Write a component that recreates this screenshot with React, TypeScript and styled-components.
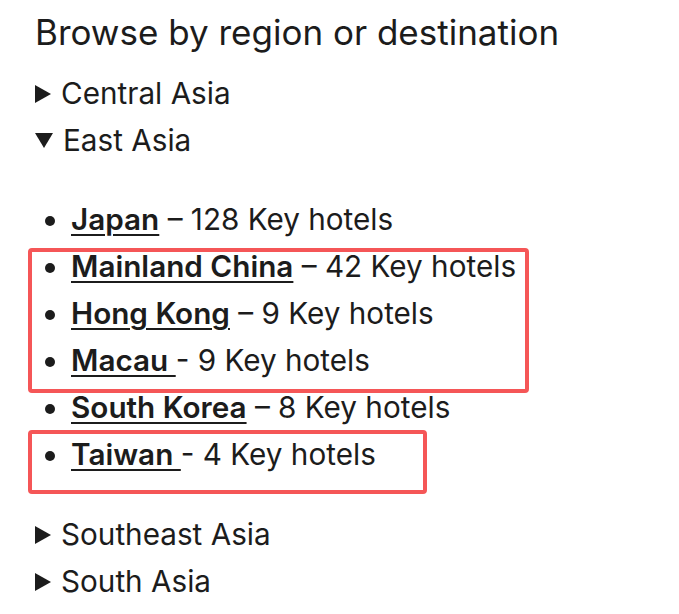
import * as React from 'react';
import styled, { createGlobalStyle } from 'styled-components';

const GlobalStyle = createGlobalStyle`
    body {
        margin: 0;
        background: #ffffff;
        color: #1c1c1c;
        font-family: Inter, "Noto Sans", sans-serif;
    }
`;

const Page = styled.div`
    position: relative;
    padding: 10px 0 0 35px;
`;

const Heading = styled.h2`
    margin: 0 0 16px;
    font-size: 35px;
    font-weight: 400;
    line-height: 44px;
`;

const Region = styled.details`
    font-size: 29.7px;
    line-height: 47px;
`;

const Summary = styled.summary`
    list-style: none;
    display: flex;
    align-items: center;
    gap: 10px;
    cursor: pointer;
    &::-webkit-details-marker {
        display: none;
    }
`;

const Arrow = styled.span<{ $open?: boolean }>`
    width: 0;
    height: 0;
    ${({ $open }) =>
        $open
            ? `border-left: 9px solid transparent;
               border-right: 9px solid transparent;
               border-top: 15px solid #1c1c1c;`
            : `border-top: 9px solid transparent;
               border-bottom: 9px solid transparent;
               border-left: 16px solid #1c1c1c;`}
`;

const CountryList = styled.ul`
    margin: 32px 0 33px;
    padding-left: 36px;
`;

const Country = styled.li`
    &::marker {
        font-size: 30px;
    }
`;

const CountryLink = styled.a`
    color: #1c1c1c;
    font-weight: 600;
    text-decoration: underline;
    text-decoration-thickness: 2px;
    text-underline-offset: 4px;
`;

const Highlight = styled.div<{ $top: number; $width: number; $height: number }>`
    position: absolute;
    left: 28px;
    top: ${({ $top }) => $top}px;
    width: ${({ $width }) => $width}px;
    height: ${({ $height }) => $height}px;
    box-sizing: border-box;
    border: 4px solid #f55657;
    border-radius: 4px;
    pointer-events: none;
`;

const countries = [
    { name: 'Japan', rest: ' – 128 Key hotels' },
    { name: 'Mainland China', rest: ' – 42 Key hotels' },
    { name: 'Hong Kong', rest: ' – 9 Key hotels' },
    { name: 'Macau ', rest: '- 9 Key hotels' },
    { name: 'South Korea', rest: ' – 8 Key hotels' },
    { name: 'Taiwan ', rest: '- 4 Key hotels' },
];

export default function App() {
    return (
        <>
            <GlobalStyle />
            <Page>
                <Heading>Browse by region or destination</Heading>
                <Region>
                    <Summary>
                        <Arrow />
                        Central Asia
                    </Summary>
                </Region>
                <Region open>
                    <Summary>
                        <Arrow $open />
                        East Asia
                    </Summary>
                    <CountryList>
                        {countries.map((c) => (
                            <Country key={c.name}>
                                <CountryLink href="#">{c.name}</CountryLink>
                                {c.rest}
                            </Country>
                        ))}
                    </CountryList>
                </Region>
                <Region>
                    <Summary>
                        <Arrow />
                        Southeast Asia
                    </Summary>
                </Region>
                <Region>
                    <Summary>
                        <Arrow />
                        South Asia
                    </Summary>
                </Region>
                <Highlight $top={248} $width={501} $height={145} />
                <Highlight $top={430} $width={399} $height={64} />
            </Page>
        </>
    );
}
